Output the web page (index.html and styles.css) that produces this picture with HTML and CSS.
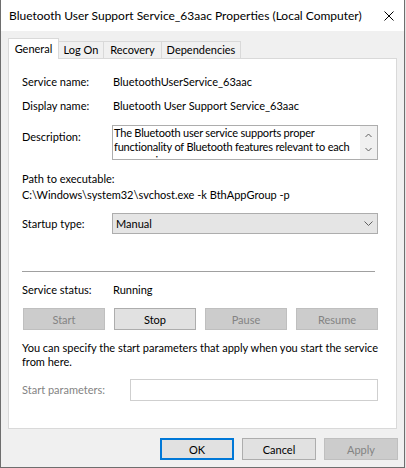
FILE: index.html
```html
<!DOCTYPE html>
<html>
<head>
    <meta charset="utf-8">
    <title>Service Properties</title>
    <link rel="stylesheet" href="styles.css">
</head>
<body>
    <div class="window">
        <div class="titlebar">
            <span class="title">Bluetooth User Support Service_63aac Properties (Local Computer)</span>
            <svg class="close" width="10" height="10" viewBox="0 0 10 10">
                <path d="M0.5 0.5 L9.5 9.5 M9.5 0.5 L0.5 9.5" stroke="#000" stroke-width="1" fill="none"/>
            </svg>
        </div>

        <div class="client">
            <div class="tabs">
                <div class="tab active" style="width: 51px">General</div>
                <div class="tab" style="width: 45px">Log On</div>
                <div class="tab" style="width: 58px">Recovery</div>
                <div class="tab" style="width: 79px">Dependencies</div>
            </div>

            <div class="panel">
                <div class="field">
                    <span class="label">Service name:</span>
                    <span class="value">BluetoothUserService_63aac</span>
                </div>
                <div class="field gap8">
                    <span class="label">Display name:</span>
                    <span class="value">Bluetooth User Support Service_63aac</span>
                </div>
                <div class="field desc-row">
                    <span class="label top">Description:</span>
                    <div class="desc-box">
                        <div class="desc-text">The Bluetooth user service supports proper<br>functionality of Bluetooth features relevant to each<br>user session.</div>
                        <div class="scroll">
                            <svg width="7" height="5" viewBox="0 0 7 5"><path d="M0.5 4 L3.5 1 L6.5 4" stroke="#606060" fill="none"/></svg>
                            <svg width="7" height="5" viewBox="0 0 7 5"><path d="M0.5 1 L3.5 4 L6.5 1" stroke="#606060" fill="none"/></svg>
                        </div>
                    </div>
                </div>
                <div class="path-label">Path to executable:</div>
                <div class="path-value">C:\Windows\system32\svchost.exe -k BthAppGroup -p</div>
                <div class="field startup-row">
                    <span class="label">Startup type:</span>
                    <div class="combo">
                        <span>Manual</span>
                        <svg width="9" height="5" viewBox="0 0 9 5"><path d="M0.5 0.5 L4.5 4.5 L8.5 0.5" stroke="#606060" fill="none"/></svg>
                    </div>
                </div>

                <div class="separator"></div>

                <div class="field status-row">
                    <span class="label">Service status:</span>
                    <span class="value">Running</span>
                </div>
                <div class="service-buttons">
                    <button class="btn" disabled>Start</button>
                    <button class="btn">Stop</button>
                    <button class="btn" disabled>Pause</button>
                    <button class="btn" disabled>Resume</button>
                </div>
                <p class="note">You can specify the start parameters that apply when you start the service from here.</p>
                <div class="field params-row">
                    <span class="label disabled">Start parameters:</span>
                    <div class="params-input"></div>
                </div>
            </div>

            <div class="actions">
                <button class="btn default">OK</button>
                <button class="btn">Cancel</button>
                <button class="btn" disabled>Apply</button>
            </div>
        </div>
    </div>
</body>
</html>
```

FILE: styles.css
```css
body {
    margin: 0;
    background: #e6e6e6;
    font-family: Lato, "Liberation Sans", sans-serif;
    font-size: 11px;
    color: #000;
}
.window {
    width: 405px;
    height: 468px;
    box-sizing: border-box;
    border: 1px solid #6e6e6e;
    border-top: none;
    background: #f0f0f0;
}
.titlebar {
    height: 31px;
    background: #fff;
    display: flex;
    align-items: center;
    justify-content: space-between;
    padding: 0 10px 0 8px;
}
.title {
    font-size: 12px;
}
.client {
    padding: 7px 7px 0 7px;
}
.tabs {
    display: flex;
    align-items: flex-end;
    height: 20px;
}
.tab {
    height: 17px;
    box-sizing: border-box;
    border: 1px solid #d9d9d9;
    border-bottom: none;
    border-left: none;
    text-align: center;
    line-height: 16px;
    background: #f0f0f0;
}
.tab.active {
    height: 21px;
    margin-bottom: -1px;
    border-left: 1px solid #d9d9d9;
    background: #fff;
    position: relative;
    z-index: 1;
    line-height: 19px;
}
.panel {
    height: 371px;
    box-sizing: border-box;
    border: 1px solid #d9d9d9;
    background: #fff;
    padding: 15px 18px 0 13px;
}
.field {
    display: flex;
    align-items: center;
    line-height: 16px;
}
.label {
    width: 90px;
    flex: none;
}
.label.top {
    align-self: flex-start;
    margin-top: 4px;
}
.label.disabled {
    color: #838383;
    width: 108px;
}
.value {
    padding-left: 1px;
}
.gap8 {
    margin-top: 8px;
}
.desc-row {
    margin-top: 11px;
}
.desc-box {
    width: 266px;
    height: 35px;
    box-sizing: border-box;
    border: 1px solid #adadad;
    display: flex;
    overflow: hidden;
}
.desc-text {
    flex: 1;
    min-width: 0;
    padding-left: 1px;
    line-height: 14px;
    letter-spacing: -0.2px;
    white-space: nowrap;
    overflow: hidden;
}
.scroll {
    width: 17px;
    flex: none;
    background: #f0f0f0;
    display: flex;
    flex-direction: column;
    align-items: center;
    justify-content: space-around;
    padding: 2px 0;
    box-sizing: border-box;
}
.scroll svg {
    display: block;
}
.path-label {
    margin-top: 11px;
    line-height: 16px;
}
.path-value {
    line-height: 16px;
}
.startup-row {
    margin-top: 10px;
}
.combo {
    width: 267px;
    height: 21px;
    box-sizing: border-box;
    border: 1px solid #adadad;
    background: #e5e5e5;
    display: flex;
    align-items: center;
    justify-content: space-between;
    padding: 0 4px 0 3px;
}
.separator {
    margin-top: 37px;
    width: 353px;
    border-top: 1px solid #a0a0a0;
}
.status-row {
    margin-top: 10px;
}
.service-buttons {
    margin-top: 10px;
    margin-left: 1px;
    width: 355px;
    display: grid;
    grid-template-columns: repeat(4, 1fr);
    gap: 9px;
}
.btn {
    height: 22px;
    box-sizing: border-box;
    border: 1px solid #adadad;
    background: #e1e1e1;
    font-family: inherit;
    font-size: 11px;
    color: #000;
    padding: 0;
}
.btn:disabled {
    background: #cccccc;
    border-color: #bfbfbf;
    color: #838383;
}
.note {
    margin: 11px 0 0 0;
    line-height: 14px;
    width: 360px;
}
.params-row {
    margin-top: 10px;
}
.params-input {
    width: 248px;
    height: 22px;
    box-sizing: border-box;
    border: 1px solid #cfcfcf;
}
.actions {
    margin-top: 9px;
    display: flex;
    justify-content: flex-end;
    gap: 8px;
    margin-right: -1px;
}
.actions .btn {
    width: 74px;
}
.btn.default {
    border: 2px solid #0078d7;
}
```
